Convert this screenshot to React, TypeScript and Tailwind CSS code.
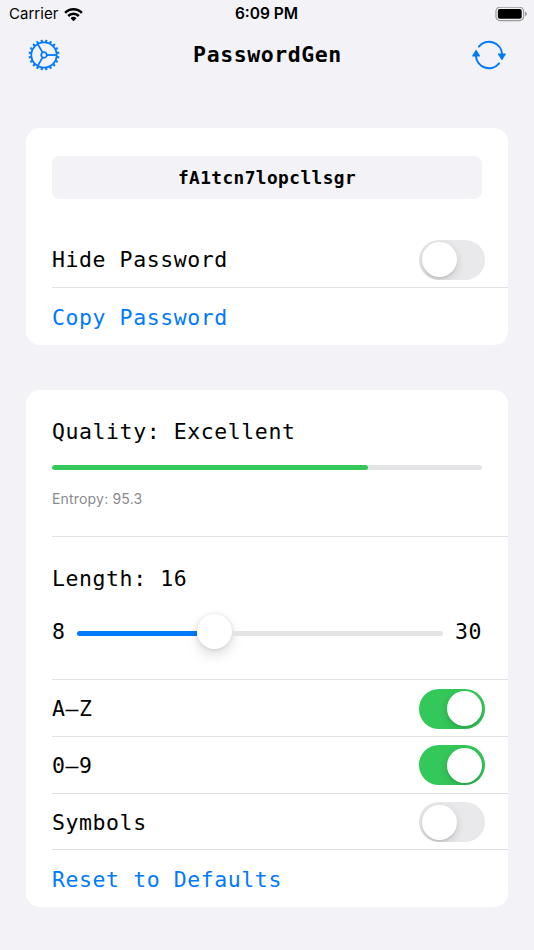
import { useState } from 'react';
import { clsx } from 'clsx';

const rowText = "font-['DejaVu_Sans_Mono',monospace] text-[21.5px] leading-[28px] tracking-[0.58px]";

function WifiIcon() {
  return (
    <svg width="19" height="15" viewBox="0 0 20 15" fill="none" stroke="black" strokeWidth="2.7">
      <path d="M1.2 5.7a12.4 12.4 0 0 1 17.6 0" />
      <path d="M4.4 9.1a7.9 7.9 0 0 1 11.2 0" />
      <path d="M10 14.6 6.9 11.5a4.4 4.4 0 0 1 6.2 0z" fill="black" stroke="none" />
    </svg>
  );
}

function BatteryIcon() {
  return (
    <svg width="32" height="15" viewBox="0 0 32 15" fill="none">
      <rect x="1" y="0.2" width="27.6" height="13.4" rx="4" stroke="#9a999d" strokeWidth="1.2" />
      <rect x="2.9" y="2.1" width="23.8" height="9.6" rx="1.8" fill="black" />
      <path d="M30 4.8c1.2.4 1.8 1.2 1.8 2.1s-.6 1.7-1.8 2.1z" fill="#9a999d" />
    </svg>
  );
}

function GearIcon() {
  const teeth = Array.from({ length: 20 }, (_, i) => i * 18 + 9);
  return (
    <svg width="32" height="32" viewBox="-16 -16 32 32" fill="none" stroke="#007aff" strokeWidth="1.8">
      <circle r="12.7" />
      <circle r="2.8" />
      {[0, 120, 240].map((angle) => (
        <path key={angle} d="M2.8 0H12.5" transform={`rotate(${angle})`} />
      ))}
      {teeth.map((angle) => (
        <path key={angle} d="M13 0H15.4" strokeWidth="2.1" transform={`rotate(${angle})`} />
      ))}
    </svg>
  );
}

function RefreshIcon() {
  return (
    <svg width="34" height="32" viewBox="-17 -16 34 32" fill="none" stroke="#007aff" strokeWidth="2" strokeLinecap="round">
      <path d="M-10.1 -8.4A13.1 13.1 0 0 1 13.1 -0.5" />
      <path d="M10.1 8.4A13.1 13.1 0 0 1 -13.1 0.5" />
      <path d="M9.6 -0.9H16.2L12.9 4.4z" fill="#007aff" strokeWidth="1.2" strokeLinejoin="round" />
      <path d="M-9.6 0.9H-16.2L-12.9 -4.4z" fill="#007aff" strokeWidth="1.2" strokeLinejoin="round" />
    </svg>
  );
}

function Toggle({ on, label, onChange }: { on: boolean; label: string; onChange: () => void }) {
  return (
    <button
      role="switch"
      aria-checked={on}
      aria-label={label}
      onClick={onChange}
      className={clsx(
        'flex h-10 w-[66px] items-center overflow-hidden rounded-full px-[2.7px]',
        on ? 'justify-end bg-[#34c759]' : 'justify-start bg-[#e9e9eb]',
      )}
    >
      <span className="size-[35px] rounded-full bg-white shadow-[0_3px_8px_rgba(0,0,0,0.15),0_2px_1px_rgba(0,0,0,0.06)]" />
    </button>
  );
}

function ToggleRow({ label, on, onChange }: { label: string; on: boolean; onChange: () => void }) {
  return (
    <div className="ml-[26px] flex h-[56.8px] items-center justify-between border-b border-[#e2e2e4] pt-[1.5px] pr-[23px]">
      <span className={clsx(rowText, 'pt-px')}>{label}</span>
      <Toggle on={on} label={label} onChange={onChange} />
    </div>
  );
}

export default function App() {
  const [hidden, setHidden] = useState(false);
  const [letters, setLetters] = useState(true);
  const [digits, setDigits] = useState(true);
  const [symbols, setSymbols] = useState(false);

  return (
    <div className="h-[950px] w-[534px] overflow-hidden bg-[#f2f2f7] font-['Inter',sans-serif] text-black">
      {/* Status bar */}
      <div className="grid h-7 grid-cols-3 items-center pr-[7px] pl-[9px]">
        <div className="flex items-center gap-[6px]">
          <span className="text-[15px] leading-5 tracking-[0.02px]">Carrier</span>
          <WifiIcon />
        </div>
        <span className="pr-[3px] text-center text-[15.5px] leading-5 font-semibold">6:09 PM</span>
        <div className="flex justify-end">
          <BatteryIcon />
        </div>
      </div>

      {/* Navigation bar */}
      <header className="flex h-[54px] items-center justify-between pr-7 pl-7">
        <button aria-label="Settings">
          <GearIcon />
        </button>
        <h1 className="pl-[3px] font-['DejaVu_Sans_Mono',monospace] text-[21.5px] font-bold tracking-[0.58px]">PasswordGen</h1>
        <button aria-label="Refresh">
          <RefreshIcon />
        </button>
      </header>

      {/* Password */}
      <section className="mx-[26px] mt-[46px] h-[217px] rounded-[14px] bg-white pt-7">
        <div className="mx-[26px] flex h-[43px] items-center justify-center rounded-lg bg-[#f2f2f7] pt-[2px] font-['DejaVu_Sans_Mono',monospace] text-[17.8px] font-bold tracking-[0.43px]">
          fA1tcn7lopcllsgr
        </div>
        <div className="mt-[32px]">
          <ToggleRow label="Hide Password" on={hidden} onChange={() => setHidden(!hidden)} />
        </div>
        <button className={clsx(rowText, 'ml-[26px] flex h-[57px] items-center pt-[3px] text-[#007aff]')}>Copy Password</button>
      </section>

      {/* Options */}
      <section className="mx-[26px] mt-[45px] h-[517px] rounded-[14px] bg-white">
        <div className="ml-[26px] h-[147px] border-b border-[#e2e2e4] pt-[28px] pr-[26px]">
          <p className={rowText}>Quality: Excellent</p>
          <div className="mt-[19px] h-[5px] overflow-hidden rounded-full bg-[#e4e4e6]">
            <div className="h-full w-[315.5px] rounded-full bg-[#34c759]" />
          </div>
          <p className="mt-[19px] text-[14px] leading-5 tracking-[0.18px] text-[#8a8a8e]">Entropy: 95.3</p>
        </div>

        <div className="ml-[26px] h-[143px] border-b border-[#e2e2e4] pt-[28px] pr-[26px]">
          <p className={rowText}>Length: 16</p>
          <div className="mt-[21px] flex h-[35px] items-center">
            <span className={clsx(rowText, 'w-[25px] pt-px')}>8</span>
            <div className="flex w-[366px] items-center">
              <div className="mt-[3px] h-[5px] w-[120px] rounded-l-full bg-[#007aff]" />
              <div className="size-[35px] rounded-full bg-white shadow-[0_6px_13px_rgba(0,0,0,0.13),0_0.5px_4px_rgba(0,0,0,0.13)]" />
              <div className="mt-[3px] h-[5px] flex-1 rounded-r-full bg-[#e4e4e6]" />
            </div>
            <span className={clsx(rowText, 'ml-[12px] pt-px')}>30</span>
          </div>
        </div>

        <ToggleRow label="A–Z" on={letters} onChange={() => setLetters(!letters)} />
        <ToggleRow label="0–9" on={digits} onChange={() => setDigits(!digits)} />
        <ToggleRow label="Symbols" on={symbols} onChange={() => setSymbols(!symbols)} />
        <button className={clsx(rowText, 'ml-[26px] flex h-[57px] items-center pt-[2px] text-[#007aff]')}>Reset to Defaults</button>
      </section>
    </div>
  );
}
